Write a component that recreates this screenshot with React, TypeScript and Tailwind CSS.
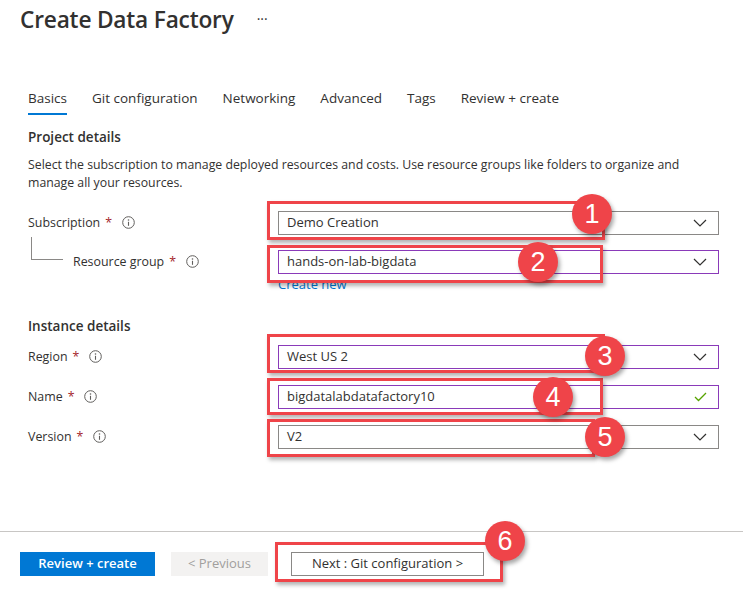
import React from 'react';

const font = { fontFamily: '"Open Sans", "Noto Sans", Arial, sans-serif' };

const InfoIcon = () => (
    <svg width="13" height="13" viewBox="0 0 13 13" className="shrink-0">
        <circle cx="6.5" cy="6.5" r="5.8" fill="none" stroke="#605e5c" strokeWidth="1" />
        <circle cx="6.5" cy="4" r="0.8" fill="#605e5c" />
        <path d="M6.5 5.8 V9.8" stroke="#605e5c" strokeWidth="1.1" />
    </svg>
);

const Chevron = () => (
    <svg width="14" height="8" viewBox="0 0 14 8" className="shrink-0">
        <path d="M1 1 L7 7 L13 1" fill="none" stroke="#323130" strokeWidth="1.2" />
    </svg>
);

const Check = () => (
    <svg width="13" height="10" viewBox="0 0 13 10" className="shrink-0">
        <path d="M1 5 L4.5 8.5 L12 1" fill="none" stroke="#57a300" strokeWidth="1.3" />
    </svg>
);

const Label = ({ text, indent }: { text: string; indent?: boolean }) => (
    <div className={`flex items-center gap-[7px] text-[12.4px] text-[#323130] w-[250px] ${indent ? 'pl-[45px]' : ''}`}>
        <span>{text}</span>
        <span className="text-[#a4262c] -ml-[2px]">*</span>
        <span className="ml-[3px] flex"><InfoIcon /></span>
    </div>
);

const Field = ({ value, purple, check }: { value: string; purple?: boolean; check?: boolean }) => (
    <div
        className={`flex items-center justify-between h-[24px] w-[441px] border px-2 text-[13px] text-[#323130] ${
            purple ? 'border-[#8a3ab9]' : 'border-[#8a8886]'
        }`}
    >
        <span>{value}</span>
        <span className="pr-[3px] flex">{check ? <Check /> : <Chevron />}</span>
    </div>
);

const Badge = ({ n, x, y }: { n: number; x: number; y: number }) => (
    <div
        className="absolute flex items-center justify-center w-[40px] h-[40px] rounded-full bg-[#ef4449] text-white text-[27px] shadow-[2px_3px_4px_rgba(0,0,0,0.35)]"
        style={{ left: x - 20, top: y - 20, fontFamily: 'Arial, "Liberation Sans", sans-serif' }}
    >
        {n}
    </div>
);

const Box = ({ l, t, r, b }: { l: number; t: number; r: number; b: number }) => (
    <div
        className="absolute border-[3px] border-[#ef4449] shadow-[2px_3px_4px_rgba(0,0,0,0.3)]"
        style={{ left: l, top: t, width: r - l, height: b - t }}
    />
);

export default function App() {
    const tabs = ['Basics', 'Git configuration', 'Networking', 'Advanced', 'Tags', 'Review + create'];
    return (
        <div className="relative w-[743px] h-[590px] bg-white overflow-hidden text-[#323130]" style={font}>
            <div className="flex items-center h-[32px] mt-[4px] pl-[20px]">
                <h1 className="text-[22.7px] font-semibold leading-[32px] tracking-[-0.2px]">Create Data Factory</h1>
                <span className="ml-[23px] text-[14px] -mt-[4px] text-[#323130]">···</span>
            </div>

            <div className="pl-[28px]">
                <div className="flex gap-[25px] mt-[52px] text-[13.5px]">
                    {tabs.map((t, i) => (
                        <div
                            key={t}
                            className={`leading-[20px] pb-[5px] border-b-2 ${i === 0 ? 'border-[#0078d4]' : 'border-transparent'}`}
                        >
                            {t}
                        </div>
                    ))}
                </div>

                <div className="mt-[12px] text-[13.5px] font-semibold leading-[20px]">Project details</div>
                <p className="mt-[9px] text-[12.3px] leading-[18px] whitespace-nowrap">
                    Select the subscription to manage deployed resources and costs. Use resource groups like folders to organize and
                    <br />
                    manage all your resources.
                </p>

                <div className="flex items-center mt-[19px]">
                    <Label text="Subscription" />
                    <Field value="Demo Creation" />
                </div>
                <div className="relative flex items-center mt-[15px]">
                    <div className="absolute left-[3px] -top-[13px] w-[32px] h-[23px] border-l border-b border-[#8a8886]" />
                    <Label text="Resource group" indent />
                    <Field value="hands-on-lab-bigdata" purple />
                </div>
                <div className="mt-[2px] pl-[250px] text-[13px] leading-[16px] text-[#0078d4]">Create new</div>

                <div className="mt-[24px] text-[13.5px] font-semibold leading-[20px]">Instance details</div>
                <div className="flex items-center mt-[9px]">
                    <Label text="Region" />
                    <Field value="West US 2" purple />
                </div>
                <div className="flex items-center mt-[16px]">
                    <Label text="Name" />
                    <Field value="bigdatalabdatafactory10" purple check />
                </div>
                <div className="flex items-center mt-[16px]">
                    <Label text="Version" />
                    <Field value="V2" />
                </div>
            </div>

            <div className="absolute left-0 right-0 top-[531px] h-px bg-[#c8c6c4]" />
            <div className="absolute left-[20px] top-[552px] flex items-center text-[13px]">
                <button className="h-[24px] w-[135px] bg-[#0078d4] text-white font-semibold">Review + create</button>
                <button className="ml-[16px] h-[24px] w-[97px] bg-[#f3f2f1] text-[#a19f9d]">&lt; Previous</button>
                <button className="ml-[23px] h-[24px] w-[193px] border border-[#8a8886] text-[#323130]">Next : Git configuration &gt;</button>
            </div>

            <Box l={267} t={201} r={605} b={240} />
            <Box l={267} t={245} r={603} b={283} />
            <Box l={267} t={334} r={605} b={373} />
            <Box l={267} t={378} r={603} b={415} />
            <Box l={267} t={419} r={595} b={457} />
            <Box l={275} t={542} r={503} b={582} />
            <Badge n={1} x={592} y={214} />
            <Badge n={2} x={538} y={262} />
            <Badge n={3} x={605} y={356} />
            <Badge n={4} x={553} y={397} />
            <Badge n={5} x={605} y={437} />
            <Badge n={6} x={505} y={541} />
        </div>
    );
}
